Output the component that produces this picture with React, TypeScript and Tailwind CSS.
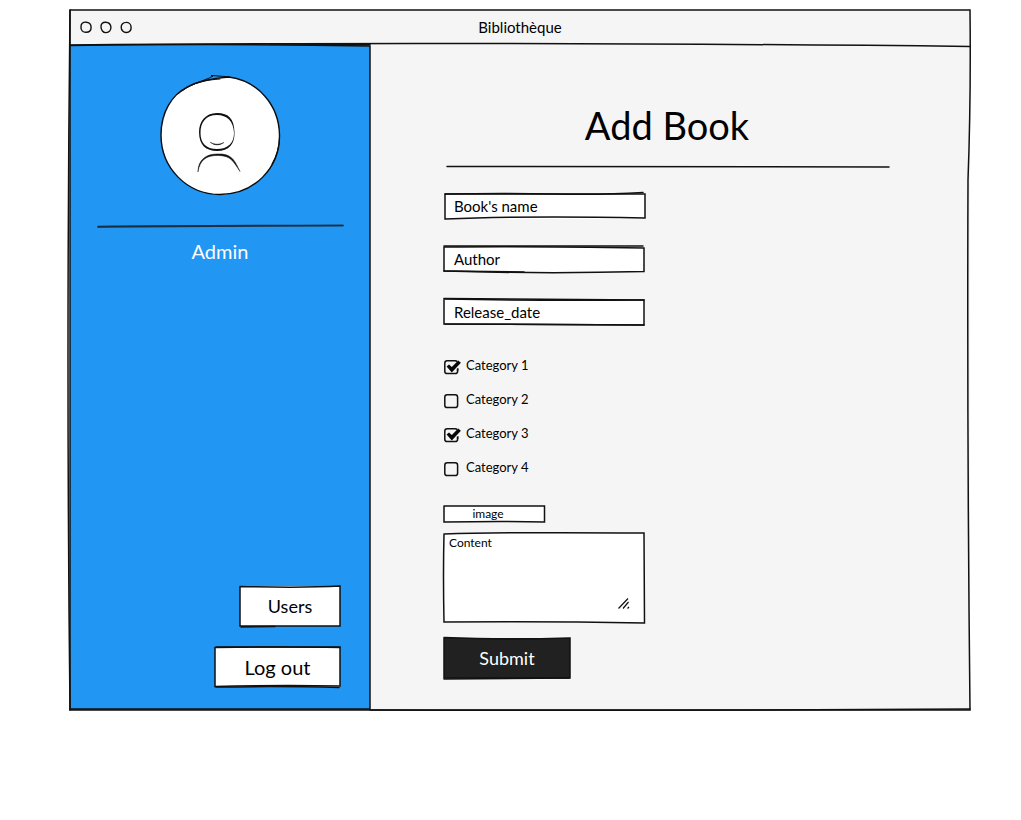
import type { ReactNode } from "react";

type SketchProps = { viewBox: string; paths: string[]; className?: string };

/* Hand-drawn outline that stretches over its parent box. */
function Sketch({ viewBox, paths, className = "text-[#111]" }: SketchProps) {
  return (
    <svg
      aria-hidden="true"
      viewBox={viewBox}
      preserveAspectRatio="none"
      className={`pointer-events-none absolute inset-0 h-full w-full overflow-visible ${className}`}
      fill="none"
      stroke="currentColor"
      strokeWidth="1.5"
      strokeLinecap="round"
    >
      {paths.map((d) => (
        <path key={d} d={d} vectorEffect="non-scaling-stroke" />
      ))}
    </svg>
  );
}

function Field({ label, paths }: { label: string; paths: string[] }) {
  return (
    <div className="relative h-[26px] w-[200px] bg-white">
      <input
        type="text"
        aria-label={label}
        placeholder={label}
        className="block h-full w-full bg-transparent px-2.5 text-[15px] text-black outline-none placeholder:text-black placeholder:opacity-100"
      />
      <Sketch viewBox="0 0 200 26" paths={paths} />
    </div>
  );
}

function Category({ label, checked = false }: { label: string; checked?: boolean }) {
  return (
    <label className="flex h-[34px] items-center gap-2 text-[13px]">
      <span className="relative block h-3.5 w-3.5">
        <input type="checkbox" defaultChecked={checked} className="peer block h-3.5 w-3.5 appearance-none" />
        <svg
          aria-hidden="true"
          viewBox="0 0 14 14"
          className="pointer-events-none absolute inset-0 h-3.5 w-3.5 overflow-visible"
        >
          <rect x=".8" y=".8" width="12.8" height="12.8" rx="2.4" fill="none" stroke="#111" strokeWidth="1.5" />
        </svg>
        <svg
          aria-hidden="true"
          viewBox="0 0 18 14"
          className="pointer-events-none absolute top-0 left-0 hidden h-3.5 w-[18px] overflow-visible peer-checked:block"
        >
          <path d="M11.5 3 15 0l2 2v4.500l-5 3z" fill="#f5f5f5" />
          <path d="M13.600 8.500V11" stroke="#111" strokeWidth="1.500" />
          <path d="M2.600 6.600 5 4.400l2.800 2.500L14.200.600l2.700 2.200-9.100 9.600z" fill="#080808" />
        </svg>
      </span>
      <span className="pb-0.5">{label}</span>
    </label>
  );
}

type ButtonProps = { children: ReactNode; className: string; viewBox: string; paths: string[]; type?: "button" | "submit" };

function SketchButton({ children, className, viewBox, paths, type = "button" }: ButtonProps) {
  return (
    <button type={type} className={`relative block cursor-pointer text-center ${className}`}>
      {children}
      <Sketch viewBox={viewBox} paths={paths} />
    </button>
  );
}

const fieldPaths = {
  name: ["M1 1Q60 0 110 1T199-.5", "M1 1 201 1V25Q150 24 110 24 50 24 1 26V1"],
  author: ["M0 0H199", "M0 1Q80 0 200 2V25.5Q100 28 0 25V1", "M0 25 80 26"],
  date: ["M0-.5Q80 0 200 1V26L0 25V1", "M0 0Q100 2 200 1", "M1 25 200 26"],
};

export default function App() {
  return (
    <div className="min-h-screen bg-white pt-2.5 pr-[51px] pb-10 pl-[70px] font-['Lato','Noto_Sans',sans-serif] text-black">
      <div className="relative flex min-h-[700px] flex-col bg-[#f5f5f5]">
        <header className="relative flex h-[35px] items-center justify-center text-[15px]">
          <svg
            aria-hidden="true"
            viewBox="0 0 56 14"
            className="absolute left-[9px] h-3.5 w-14"
            fill="none"
            stroke="#111"
            strokeWidth="1.4"
          >
            <path d="M7 1.2C4 .9 1.8 3 2 6c-.3 3.300 1.800 5.300 4.900 5.300 3.200.2 5.300-1.700 5.200-4.900C12.200 3.200 10 1.100 7 1.200Z" />
            <path d="M26.700 1.200c-3.300-.1-4.900 1.900-4.700 4.600 0 3.100 2.100 6.100 5.100 5.800 3.200-.2 5.100-2.700 4.800-5.500-.2-3-2.200-4.700-5.200-4.900Z" />
            <path d="M47 1.400c-2.700 0-4.900 2-4.800 4.800 0 3 2.300 5.500 5.200 5.300 3-.1 4.900-2.300 4.700-5.300C52 3.300 49.900 1.300 47 1.400Z" />
          </svg>
          <h1>Bibliothèque</h1>
        </header>

        <div className="flex flex-1">
          <aside className="relative flex w-[300px] shrink-0 flex-col bg-[#2196f3] px-[27px] pt-[31px] pb-[23px]">
            <svg
              role="img"
              aria-label="User avatar"
              viewBox="0 0 120 120"
              className="mx-auto block h-[120px] w-[120px] overflow-visible"
              fill="none"
              stroke="#0b0b0b"
              strokeLinecap="round"
            >
              <path
                d="M69 1C98 5 119 29 119.500 59C120 92 94 118.500 60 118.500C27 118.500 1 92 1 59C1 36 12 19 27 11Q42 3 69 1Z"
                fill="white"
                strokeWidth="1.4"
              />
              <path d="M18 18C30 7 43 6 53 0L51-.500 69 .800" strokeWidth="1" />
              <path d="M22 15C34 6 46 4 60 3M119.500 62Q119 76 112 88" strokeWidth="1" />
              <g fill="#111" stroke="none">
                <path
                  fillRule="evenodd"
                  d="M57 37C45 37 39 46 39 56C39 69 46 75 57 75C69 75 75 68 74.500 56C74 43 69 37 57 37ZM57 39C67 39 73.500 45 74 57C74 67 68 73 57 73C46 73 40.500 67 40.500 57C40.500 46 46 39 57 39Z"
                />
                <path d="M50.500 66.500Q57 70 64 66.500Q57 71.500 50.500 66.500Z" stroke="#111" strokeWidth=".4" />
                <path d="M38 95.500C38 84 46 78 57 78C72 77 75 85 80 95.500C73 85 71 80 59 79.500C46 79 40 84 38 95.500Z" stroke="#111" strokeWidth=".5" />
              </g>
            </svg>

            <div className="relative mt-[29px] h-1">
              <Sketch
                viewBox="0 0 246 4"
                className="text-[#1d2f3d]"
                paths={["M1 1.500Q90 .500 246 .500", "M1 2Q120 1 246 .500"]}
              />
            </div>
            <p className="mt-2 text-center text-xl leading-7 text-white">Admin</p>

            <nav className="mt-auto mr-[3px] flex flex-col items-end gap-[21px]">
              <SketchButton
                className="h-10 w-[100px] bg-white text-lg"
                viewBox="0 0 100 40"
                paths={["M0 .500Q65 2 100 0V40H0V.500", "M1 41 35 40.500"]}
              >
                Users
              </SketchButton>
              <SketchButton
                className="h-10 w-[125px] bg-white text-xl"
                viewBox="0 0 125 40"
                paths={["M1 0H125V39Q60 38 0 39.500V1", "M0 .500Q70-.500 125 .500", "M1 40Q70 39 124 40.500"]}
              >
                Log out
              </SketchButton>
            </nav>
            <Sketch
              viewBox="0 0 300 665"
              paths={["M0 .500Q160-1.500 300 1V664H0", "M200-1 300-.500"]}
            />
          </aside>

          <main className="min-w-0 flex-1 pr-20 pb-[31px] pl-[74px]">
            <h2 className="pt-[55px] text-center text-[38px] leading-[50px]">Add Book</h2>
            <div className="relative mt-4 ml-0.5 h-px">
              <Sketch viewBox="0 0 444 1" paths={["M1 .500Q180 .500 443 1"]} />
            </div>

            <form className="mt-[26px] flex flex-col items-start" onSubmit={(e) => e.preventDefault()}>
              <div className="flex flex-col gap-[27px]">
                <Field label="Book's name" paths={fieldPaths.name} />
                <Field label="Author" paths={fieldPaths.author} />
                <Field label="Release_date" paths={fieldPaths.date} />
              </div>

              <div className="mt-[25px]">
                <Category label="Category 1" checked />
                <Category label="Category 2" />
                <Category label="Category 3" checked />
                <Category label="Category 4" />
              </div>

              <SketchButton
                className="mt-5 h-4 w-[100px] bg-white pr-3 text-xs leading-4"
                viewBox="0 0 100 16"
                paths={["M0 0H100.500V16Q60 15 0 16V0"]}
              >
                image
              </SketchButton>

              <div className="relative mt-[11px] h-[90px] w-[200px] bg-white">
                <textarea
                  aria-label="Content"
                  placeholder="Content"
                  className="block h-full w-full resize-none bg-transparent px-[5px] py-0.5 text-xs leading-4 outline-none placeholder:text-black placeholder:opacity-100"
                />
                <Sketch
                  viewBox="0 0 200 90"
                  paths={["M0 1Q60-1 200 0L200.500 90Q100 88 0 89Q-1 40 0 1"]}
                />
                <svg
                  aria-hidden="true"
                  viewBox="0 0 12 12"
                  className="pointer-events-none absolute right-3.5 bottom-3.5 h-3 w-3"
                  fill="none"
                  stroke="#111"
                  strokeWidth="1.200"
                >
                  <path d="M.500 11.500 10 1.500M5 11.500 10.500 5M9.500 11.500 11 10" />
                </svg>
              </div>

              <SketchButton
                type="submit"
                className="mt-[15px] h-10 w-[126px] bg-[#212121] text-lg text-white"
                viewBox="0 0 126 40"
                paths={["M0-.500Q60 2 126 0V40H0V0", "M0 41 125 40"]}
              >
                Submit
              </SketchButton>
            </form>
          </main>
        </div>
        <Sketch
          viewBox="0 0 900 700"
          paths={[
            "M0 0Q420 1 900 0Q901 90 898 170Q897 430 900 700Q460 701 0 700Q-4 350 0 0",
            "M0 0V700",
            "M0 35Q200 33 440 33.500T900 36.500",
            "M300 700Q600 701 900 699",
          ]}
        />
      </div>
    </div>
  );
}
